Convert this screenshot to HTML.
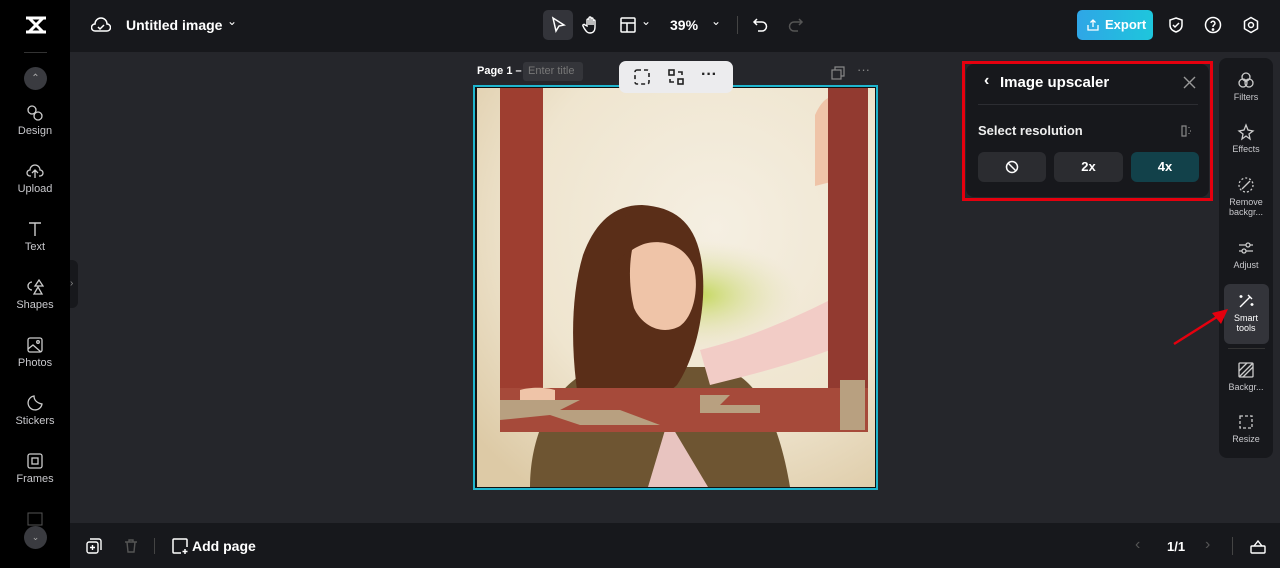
<!DOCTYPE html>
<html><head><meta charset="utf-8"><style>
*{margin:0;padding:0;box-sizing:border-box}
body{width:1280px;height:568px;overflow:hidden;background:#25262b;font-family:"Liberation Sans",sans-serif;color:#e8e8ea;position:relative}
.abs{position:absolute}
#left{left:0;top:0;width:70px;height:568px;background:#000}
#top{left:70px;top:0;width:1210px;height:52px;background:#17181c}
#bot{left:70px;top:523px;width:1210px;height:45px;background:#17181c}
.nav{position:absolute;left:0;width:70px;text-align:center;font-size:11px;color:#c8c8cc}
.nav svg{display:block;margin:0 auto 3px}
.rt{position:absolute;left:1220px;width:52px;text-align:center;font-size:9px;color:#c8c8cc;line-height:10px}
.rt svg{display:block;margin:0 auto 3px}
.btn{position:absolute;top:152px;height:30px;background:#2b2c30;border-radius:6px;font-weight:bold;font-size:13px;text-align:center;line-height:30px;color:#fff}
</style></head><body>
<div id="left" class="abs"></div>
<div id="top" class="abs"></div>
<div id="bot" class="abs"></div>
<svg class="abs" style="left:24px;top:15px" width="24" height="20" viewBox="0 0 24 20"><path d="M2 3h20M2 17h20M5 3l14 14M19 3L5 17" stroke="#fff" stroke-width="3" fill="none"/></svg>
<div class="abs" style="left:24px;top:52px;width:23px;height:1px;background:#333"></div>
<div class="abs" style="left:24px;top:67px;width:23px;height:23px;border-radius:50%;background:#3a3b40;color:#aaa;font-size:10px;text-align:center;line-height:23px">⌃</div>
<div class="nav" style="top:104px"><svg width="18" height="18" viewBox="0 0 18 18" fill="none" stroke="#ccc" stroke-width="1.3"><circle cx="6" cy="6" r="4"/><circle cx="12" cy="12" r="4"/></svg>Design</div>
<div class="nav" style="top:162px"><svg width="18" height="18" viewBox="0 0 18 18" fill="none" stroke="#ccc" stroke-width="1.3"><path d="M5 14H4a3 3 0 010-6 5 5 0 0110 0 3 3 0 010 6h-1M9 16V9M6 11l3-3 3 3"/></svg>Upload</div>
<div class="nav" style="top:220px"><svg width="18" height="18" viewBox="0 0 18 18" fill="none" stroke="#ccc" stroke-width="1.4"><path d="M3 3h12M9 3v13"/></svg>Text</div>
<div class="nav" style="top:278px"><svg width="18" height="18" viewBox="0 0 18 18" fill="none" stroke="#ccc" stroke-width="1.3"><path d="M6 4a4 4 0 100 8M9 8l4-6 4 6zM8 16l4-7 4 7z"/></svg>Shapes</div>
<div class="nav" style="top:336px"><svg width="18" height="18" viewBox="0 0 18 18" fill="none" stroke="#ccc" stroke-width="1.3"><rect x="2" y="2" width="14" height="14" rx="2"/><path d="M2 13l5-4 8 7"/><circle cx="12" cy="6" r="1.3"/></svg>Photos</div>
<div class="nav" style="top:394px"><svg width="18" height="18" viewBox="0 0 18 18" fill="none" stroke="#ccc" stroke-width="1.3"><path d="M16 10A7 7 0 118 2c0 4 3 7 8 8z"/></svg>Stickers</div>
<div class="nav" style="top:452px"><svg width="18" height="18" viewBox="0 0 18 18" fill="none" stroke="#ccc" stroke-width="1.3"><rect x="2" y="2" width="14" height="14" rx="2"/><rect x="6" y="6" width="6" height="6"/></svg>Frames</div>
<svg class="abs" style="left:27px;top:512px" width="16" height="14"><rect x="1" y="1" width="14" height="12" fill="none" stroke="#555"/></svg>
<div class="abs" style="left:24px;top:526px;width:23px;height:23px;border-radius:50%;background:#3a3b40;color:#aaa;font-size:9px;text-align:center;line-height:23px">⌄</div>
<div class="abs" style="left:70px;top:260px;width:8px;height:48px;background:#17181c;border-radius:0 6px 6px 0;color:#888;font-size:10px;line-height:48px">›</div>
<svg class="abs" style="left:91px;top:16px" width="20" height="18" viewBox="0 0 20 18" fill="none" stroke="#fff" stroke-width="1.5"><path d="M5 15H4a3.5 3.5 0 010-7 6 6 0 0112 0 3.5 3.5 0 010 7H5z"/><path d="M7 11l2 2 4-4"/></svg>
<div class="abs" style="left:126px;top:17px;font-size:14px;font-weight:bold;color:#fff">Untitled image</div>
<div class="abs" style="left:227px;top:14px;font-size:12px;color:#fff">⌄</div>
<div class="abs" style="left:543px;top:10px;width:30px;height:30px;border-radius:5px;background:#33343a"></div>
<svg class="abs" style="left:549px;top:15px" width="18" height="20" viewBox="0 0 18 20" fill="none" stroke="#fff" stroke-width="1.5"><path d="M4 3l11 7-5 1-3 5z"/></svg>
<svg class="abs" style="left:582px;top:15px" width="18" height="20" viewBox="0 0 18 20" fill="none" stroke="#fff" stroke-width="1.4"><path d="M5 11V5a1 1 0 012 0v5V3a1 1 0 012 0v7V4a1 1 0 012 0v6V6a1 1 0 012 0v6c0 4-2 6-5 6s-4-2-6-5l-1-2a1 1 0 012-1z"/></svg>
<svg class="abs" style="left:619px;top:16px" width="18" height="18" viewBox="0 0 18 18" fill="none" stroke="#fff" stroke-width="1.5"><rect x="2" y="2" width="14" height="14" rx="1"/><path d="M2 7h14M8 7v9"/></svg>
<div class="abs" style="left:641px;top:14px;font-size:12px;color:#fff">⌄</div>
<div class="abs" style="left:670px;top:17px;font-size:14px;font-weight:bold;color:#fff">39%</div>
<div class="abs" style="left:711px;top:14px;font-size:12px;color:#fff">⌄</div>
<div class="abs" style="left:737px;top:16px;width:1px;height:18px;background:#444"></div>
<svg class="abs" style="left:752px;top:16px" width="18" height="18" viewBox="0 0 18 18" fill="none" stroke="#fff" stroke-width="1.5"><path d="M5 3L2 6l3 3M2 6h8a4 4 0 010 9H6"/></svg>
<svg class="abs" style="left:786px;top:16px" width="18" height="18" viewBox="0 0 18 18" fill="none" stroke="#555" stroke-width="1.5"><path d="M13 3l3 3-3 3M16 6H8a4 4 0 000 9h4"/></svg>
<div class="abs" style="left:1077px;top:10px;width:76px;height:30px;border-radius:5px;background:linear-gradient(90deg,#2fa6e6,#1ec6dc);color:#fff;font-weight:bold;font-size:13px;line-height:30px;padding-left:28px">Export</div>
<svg class="abs" style="left:1086px;top:18px" width="14" height="14" viewBox="0 0 14 14" fill="none" stroke="#fff" stroke-width="1.3"><path d="M2 7v5h10V7M7 9V2M4.5 4.5L7 2l2.5 2.5"/></svg>
<svg class="abs" style="left:1167px;top:16px" width="18" height="18" viewBox="0 0 18 18" fill="none" stroke="#fff" stroke-width="1.5"><path d="M9 2l6 2v5c0 4-3 6-6 7-3-1-6-3-6-7V4z"/><path d="M6 9l2 2 4-4"/></svg>
<svg class="abs" style="left:1204px;top:16px" width="18" height="18" viewBox="0 0 18 18" fill="none" stroke="#fff" stroke-width="1.5"><circle cx="9" cy="9" r="7.5"/><path d="M7 7a2 2 0 113 2c-1 .5-1 1-1 2"/><circle cx="9" cy="13.5" r=".6" fill="#fff"/></svg>
<svg class="abs" style="left:1242px;top:16px" width="18" height="18" viewBox="0 0 18 18" fill="none" stroke="#fff" stroke-width="1.5"><path d="M9 1.5l6.5 3.75v7.5L9 16.5l-6.5-3.75v-7.5z"/><circle cx="9" cy="9" r="2.5"/></svg>
<div class="abs" style="left:477px;top:65px;font-size:11px;font-weight:bold;color:#fff">Page 1 –</div>
<div class="abs" style="left:523px;top:62px;width:60px;height:19px;border-radius:3px;background:#34353a;color:#777;font-size:11px;line-height:19px;padding-left:5px">Enter title</div>
<div class="abs" style="left:473px;top:85px;width:405px;height:405px;border:2px solid #1fb6cf;background:#111"></div>
<svg class="abs" style="left:477px;top:88px" width="398" height="399" viewBox="477 88 398 399">
<defs>
<radialGradient id="bg" cx="0.6" cy="0.35" r="0.8"><stop offset="0" stop-color="#f5efe2"/><stop offset="0.6" stop-color="#efe5cf"/><stop offset="1" stop-color="#ddcaa6"/></radialGradient>
<radialGradient id="gr" cx="0.5" cy="0.5" r="0.5"><stop offset="0" stop-color="#c4d85e"/><stop offset="1" stop-color="#e8e4c0" stop-opacity="0"/></radialGradient>
</defs>
<rect x="477" y="88" width="398" height="399" fill="url(#bg)"/>
<ellipse cx="700" cy="295" rx="100" ry="55" fill="url(#gr)"/>
<path d="M530 487c0-60 30-110 70-120h120c40 10 60 60 70 120z" fill="#6e5532"/>
<path d="M700 350c40-10 80-25 130-50v50c-40 15-80 25-120 35z" fill="#f2ccc6"/>
<path d="M668 420l-20 67h60z" fill="#e8c4c0"/>
<path d="M583 255c-12 40-12 90-6 135 30 15 80 15 100-5 20-30 30-80 25-120-5-40-25-58-60-60-30 0-48 20-59 50z" fill="#5a2e18"/>
<path d="M632 250c18-14 52-10 62 18 5 20 0 48-14 58-18 10-38 0-46-18-5-20-5-42-2-58z" fill="#efc4a8"/>
<path d="M605 228c22-22 72-18 85 12-22-6-52 0-78 25z" fill="#5a2e18"/>
<path d="M815 115c8-18 18-22 22-14l-2 80-20 5z" fill="#efc4a8"/>
<rect x="500" y="88" width="43" height="344" fill="#9e3e30"/>
<rect x="828" y="88" width="40" height="344" fill="#923a30"/>
<rect x="500" y="388" width="368" height="44" fill="#a64a3a"/>
<path d="M500 400h80l-20 10h60l40 15h-80l-30-10-50 5zM700 395h30l-10 10h40v8h-60zM840 380h25v50h-25z" fill="#b8a080"/>
<path d="M520 390c10-3 25-3 35 0v10h-35z" fill="#efc4a8"/>
</svg>
<div class="abs" style="left:619px;top:61px;width:114px;height:32px;border-radius:7px;background:#ececee"></div>
<svg class="abs" style="left:633px;top:68px" width="18" height="18" viewBox="0 0 18 18" fill="none" stroke="#222" stroke-width="1.6"><rect x="2" y="2" width="14" height="14" rx="2" stroke-dasharray="4 3"/></svg>
<svg class="abs" style="left:667px;top:68px" width="18" height="18" viewBox="0 0 18 18" fill="none" stroke="#222" stroke-width="1.6"><rect x="2" y="2" width="5" height="5"/><rect x="11" y="11" width="5" height="5"/><path d="M11 4h4v3M7 14H3v-3"/></svg>
<div class="abs" style="left:701px;top:66px;font-size:16px;font-weight:bold;color:#222">···</div>
<svg class="abs" style="left:831px;top:66px" width="14" height="14" viewBox="0 0 14 14" fill="none" stroke="#888" stroke-width="1.2"><rect x="1" y="4" width="9" height="9"/><path d="M4 4V1h9v9h-3"/></svg>
<div class="abs" style="left:857px;top:62px;font-size:13px;color:#888">···</div>
<div class="abs" style="left:966px;top:64px;width:243px;height:133px;background:#17181c;border-radius:8px"></div>
<div class="abs" style="left:962px;top:61px;width:251px;height:140px;border:3px solid #e5000e"></div>
<div class="abs" style="left:984px;top:72px;font-size:16px;font-weight:bold;color:#fff">‹</div>
<div class="abs" style="left:1000px;top:74px;font-size:15px;font-weight:bold;color:#fff">Image upscaler</div>
<svg class="abs" style="left:1183px;top:76px" width="13" height="13" viewBox="0 0 13 13" stroke="#999" stroke-width="1.4"><path d="M1 1l11 11M12 1L1 12"/></svg>
<div class="abs" style="left:978px;top:104px;width:220px;height:1px;background:#2c2d32"></div>
<div class="abs" style="left:978px;top:123px;font-size:13px;font-weight:bold;color:#eee">Select resolution</div>
<svg class="abs" style="left:1179px;top:124px" width="14" height="14" viewBox="0 0 14 14" fill="none" stroke="#888" stroke-width="1.2"><path d="M7 2H3v10h4zM7 2v10"/><path d="M10 3v2M11 7h1M10 9v2" stroke-dasharray="1 1"/></svg>
<div class="btn" style="left:978px;width:68px"><svg style="margin-top:8px" width="14" height="14" viewBox="0 0 14 14" fill="none" stroke="#fff" stroke-width="1.5"><circle cx="7" cy="7" r="5.5"/><path d="M3 3l8 8"/></svg></div>
<div class="btn" style="left:1054px;width:69px">2x</div>
<div class="btn" style="left:1131px;width:68px;background:#12414a">4x</div>
<div class="abs" style="left:1219px;top:58px;width:54px;height:400px;background:#17181c;border-radius:8px"></div>
<div class="abs" style="left:1224px;top:284px;width:45px;height:60px;background:#33343a;border-radius:6px"></div>
<div class="abs" style="left:1228px;top:348px;width:37px;height:1px;background:#333"></div>
<div class="rt" style="top:71px"><svg width="18" height="18" viewBox="0 0 18 18" fill="none" stroke="#ccc" stroke-width="1.3"><circle cx="9" cy="6" r="4"/><circle cx="6" cy="12" r="4"/><circle cx="12" cy="12" r="4"/></svg>Filters</div>
<div class="rt" style="top:123px"><svg width="18" height="18" viewBox="0 0 18 18" fill="none" stroke="#ccc" stroke-width="1.3"><path d="M9 2l2 5 5 1-4 3 1 5-4-3-4 3 1-5-4-3 5-1z"/></svg>Effects</div>
<div class="rt" style="top:176px"><svg width="18" height="18" viewBox="0 0 18 18" fill="none" stroke="#ccc" stroke-width="1.3"><circle cx="9" cy="9" r="7" stroke-dasharray="2 2"/><path d="M5 13l8-8"/></svg>Remove backgr...</div>
<div class="rt" style="top:239px"><svg width="18" height="18" viewBox="0 0 18 18" fill="none" stroke="#ccc" stroke-width="1.3"><path d="M2 6h14M2 12h14"/><circle cx="11" cy="6" r="2" fill="#17181c"/><circle cx="7" cy="12" r="2" fill="#17181c"/></svg>Adjust</div>
<div class="rt" style="top:292px;color:#fff"><svg width="18" height="18" viewBox="0 0 18 18" fill="none" stroke="#fff" stroke-width="1.4"><path d="M3 15L13 5M11 3l4 4M4 3v3M2.5 4.5h3M15 11v3M13.5 12.5h3"/></svg>Smart<br>tools</div>
<div class="rt" style="top:361px"><svg width="18" height="18" viewBox="0 0 18 18" fill="none" stroke="#ccc" stroke-width="1.3"><rect x="2" y="2" width="14" height="14" rx="1"/><path d="M2 10l8-8M6 16L16 6M2 16L16 2"/></svg>Backgr...</div>
<div class="rt" style="top:413px"><svg width="18" height="18" viewBox="0 0 18 18" fill="none" stroke="#ccc" stroke-width="1.3"><rect x="3" y="3" width="12" height="12" stroke-dasharray="3 2"/></svg>Resize</div>
<svg class="abs" style="left:1170px;top:305px" width="60" height="42"><path d="M4 39L50 10" stroke="#e5000e" stroke-width="2.5"/><path d="M58 4L42 8l9 11z" fill="#e5000e"/></svg>
<svg class="abs" style="left:85px;top:537px" width="18" height="18" viewBox="0 0 18 18" fill="none" stroke="#fff" stroke-width="1.4"><rect x="2" y="5" width="11" height="11" rx="2"/><path d="M5 2h9a2 2 0 012 2v9M7.5 8v5M5 10.5h5"/></svg>
<svg class="abs" style="left:123px;top:538px" width="16" height="16" viewBox="0 0 16 16" fill="none" stroke="#555" stroke-width="1.4"><path d="M2 4h12M6 4V2h4v2M4 4l1 10h6l1-10"/></svg>
<div class="abs" style="left:154px;top:538px;width:1px;height:16px;background:#444"></div>
<svg class="abs" style="left:171px;top:537px" width="18" height="18" viewBox="0 0 18 18" fill="none" stroke="#fff" stroke-width="1.5"><path d="M10 16H3a1 1 0 01-1-1V3a1 1 0 011-1h12a1 1 0 011 1v7M14 12v5M11.5 14.5h5"/></svg>
<div class="abs" style="left:192px;top:538px;font-size:14px;font-weight:bold;color:#fff">Add page</div>
<div class="abs" style="left:1135px;top:536px;font-size:16px;color:#555">‹</div>
<div class="abs" style="left:1167px;top:539px;font-size:13px;font-weight:bold;color:#fff">1/1</div>
<div class="abs" style="left:1205px;top:536px;font-size:16px;color:#555">›</div>
<div class="abs" style="left:1232px;top:537px;width:1px;height:18px;background:#444"></div>
<svg class="abs" style="left:1249px;top:537px" width="18" height="18" viewBox="0 0 18 18" fill="none" stroke="#fff" stroke-width="1.4"><rect x="2" y="9" width="14" height="7" rx="1"/><path d="M5 9l4-5 4 5"/></svg>
</body></html>
